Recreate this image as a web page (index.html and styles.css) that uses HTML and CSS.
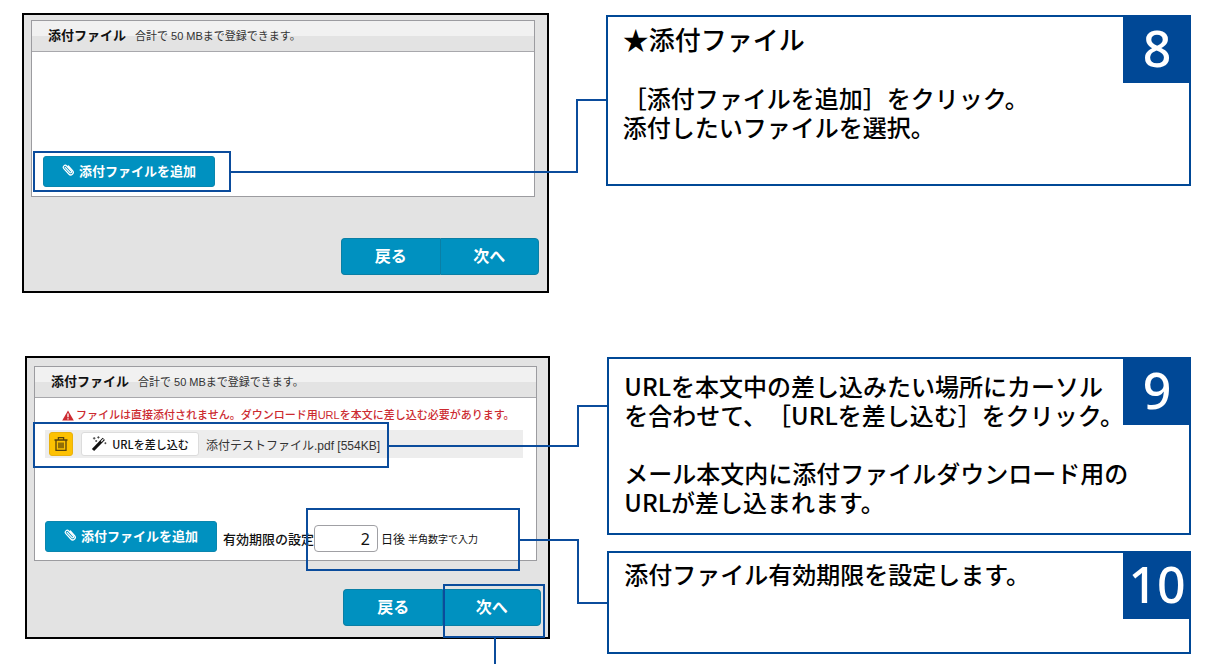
FILE: index.html
```html
<!DOCTYPE html>
<html lang="ja">

<head>
    <meta charset="UTF-8">
    <meta name="viewport" content="width=device-width, initial-scale=1">
    <title>添付ファイル</title>
    <link rel="stylesheet" href="styles.css">
</head>

<body>
    <svg class="defs" aria-hidden="true">
        <symbol id="clip" viewBox="0 0 12 12">
            <path d="M3.2 3.4 8 8.6a1 1 0 0 0 1.5-1.3L4.7 2A1.9 1.9 0 0 0 1.8 4.6l5 5.4a2.5 2.5 0 0 0 3.8-3.4L6.4 2" fill="none" stroke="currentColor" stroke-width="1.2" stroke-linecap="round"/>
        </symbol>
    </svg>

    <main class="page">
        <section class="step">
            <div class="frame">
                <div class="panel">
                    <div class="panel-head"><h2>添付ファイル</h2><span>合計で 50 MBまで登録できます。</span></div>
                    <div class="panel-body">
                        <div class="add-row">
                            <button type="button" class="btn-add"><svg><use href="#clip"/></svg>添付ファイルを追加</button>
                        </div>
                    </div>
                </div>
                <div class="nav">
                    <button type="button">戻る</button>
                    <button type="button">次へ</button>
                </div>
                <div class="mark mark-add"></div>
                <div class="line line-add"></div>
            </div>
            <div class="notes">
                <article class="note note8">
                    <h3>★添付ファイル</h3>
                    <p>［添付ファイルを追加］をクリック。<br>添付したいファイルを選択。</p>
                    <div class="badge">8</div>
                    <div class="tail"></div>
                </article>
            </div>
        </section>

        <section class="step step2">
            <div class="frame">
                <div class="panel">
                    <div class="panel-head"><h2>添付ファイル</h2><span>合計で 50 MBまで登録できます。</span></div>
                    <div class="panel-body">
                        <p class="warn">
                            <svg viewBox="0 0 12 11"><path d="M6 .4 11.8 10.6H.2z" fill="#cc2a30"/><path d="M6 3.6v3.6M6 8.2v1.3" stroke="#fff" stroke-width="1.3"/></svg>ファイルは直接添付されません。ダウンロード用URLを本文に差し込む必要があります。
                        </p>
                        <div class="file">
                            <button type="button" class="btn-trash" aria-label="削除">
                                <svg viewBox="0 0 16 16" fill="none" stroke="#59430c" stroke-width="1.3"><path d="M1.5 4h13M5.4 3.8V1.6h5.2v2.2M3 4.2v10.2h10V4.2M6 6.4v5.8M8 6.4v5.8M10 6.4v5.8"/></svg>
                            </button>
                            <button type="button" class="btn-url">
                                <svg viewBox="0 0 16 16"><path d="M2 14 12.8 2.8" stroke="#111" stroke-width="3.2"/><path d="m10.2 5.5 2.2-2.3" stroke="#fff" stroke-width="1.2"/><path d="M3.2 1v2.6M1.9 2.3h2.6M7.4.2v2.4M6.2 1.4h2.4M5.2 4v2M4.2 5h2M14.4 6.2v2M13.4 7.2h2" stroke="#333" stroke-width=".8"/></svg>URLを差し込む
                            </button>
                            <span>添付テストファイル.pdf [554KB]</span>
                        </div>
                        <div class="add-row">
                            <button type="button" class="btn-add"><svg><use href="#clip"/></svg>添付ファイルを追加</button>
                            <div class="limit">
                                <label for="days">有効期限の設定</label>
                                <input type="text" id="days" value="2" inputmode="numeric">
                                <span>日後</span>
                                <small>半角数字で入力</small>
                            </div>
                        </div>
                    </div>
                </div>
                <div class="nav">
                    <button type="button">戻る</button>
                    <button type="button">次へ</button>
                </div>
                <div class="mark mark-file"></div>
                <div class="line line-file"></div>
                <div class="mark mark-limit"></div>
                <div class="line line-limit"></div>
                <div class="mark mark-next"></div>
                <div class="line line-next"></div>
            </div>
            <div class="notes">
                <article class="note note9">
                    <p>URLを本文中の差し込みたい場所にカーソル<br>を合わせて、［URLを差し込む］をクリック。</p>
                    <p>メール本文内に添付ファイルダウンロード用の<br>URLが差し込まれます。</p>
                    <div class="badge">9</div>
                    <div class="tail"></div>
                </article>
                <article class="note note10">
                    <p>添付ファイル有効期限を設定します。</p>
                    <div class="badge">10</div>
                    <div class="tail"></div>
                </article>
            </div>
        </section>
    </main>
</body>

</html>
```
FILE: styles.css
```css
* {
    box-sizing: border-box;
}

body {
    margin: 0;
    background: #fff;
    color: #111;
    font-family: "Liberation Sans", "Noto Sans CJK JP", sans-serif;
    text-spacing-trim: space-all;
}

h2, h3, p {
    margin: 0;
}

button, input {
    margin: 0;
    padding: 0;
    font-family: inherit;
}

.defs {
    display: none;
}

.page {
    padding: 13px 16px 10px 22px;
}

.step {
    display: grid;
    grid-template-columns: 9fr 10fr;
    gap: 57px;
    align-items: start;
}

.step2 {
    margin-top: 63px;
    padding-left: 3px;
}

/* screen */
.frame {
    position: relative;
    border: 2px solid #000;
    background: #e3e3e3;
    padding: 5px 12px 16px 7px;
    white-space: nowrap;
}

.step2 .frame {
    padding: 8px 11px 11px 7px;
}

.panel {
    border: 1px solid #9c9ca0;
    background: #fff;
}

.panel-head {
    display: flex;
    align-items: center;
    gap: 9px;
    height: 31px;
    padding-left: 16px;
    border-bottom: 1px solid #a8a8ac;
    background: linear-gradient(#f1f1f1 50%, #e3e3e3 50%);
}

.panel-head h2 {
    font-size: 13px;
    line-height: 20px;
}

.panel-head span {
    font-size: 11px;
    line-height: 20px;
    color: #333;
}

.panel-body {
    display: flex;
    flex-direction: column;
    min-height: 144px;
    padding: 9px 13px 9px 11px;
}

.step2 .panel-body {
    min-height: 162px;
    padding: 9px 13px 8px 10px;
}

.add-row {
    display: flex;
    gap: 6px;
    margin-top: auto;
}

.btn-add {
    display: flex;
    align-items: center;
    justify-content: center;
    gap: 5px;
    width: 172px;
    height: 31px;
    padding-bottom: 3px;
    border: 1px solid #0a86ae;
    border-radius: 3px;
    background: #0091c0;
    color: #fff;
    font-size: 13px;
    font-weight: bold;
}

.btn-add svg {
    width: 12px;
    height: 12px;
}

.nav {
    display: flex;
    justify-content: flex-end;
    margin: 41px -4px 0 0;
}

.step2 .nav {
    margin-top: 28px;
}

.nav button {
    width: 99px;
    height: 37px;
    padding-bottom: 4px;
    border: 1px solid #0a7fa5;
    border-radius: 0 4px 4px 0;
    background: #0091c0;
    color: #fff;
    font-size: 16px;
    font-weight: bold;
}

.nav button:first-child {
    border-right: 0;
    border-radius: 4px 0 0 4px;
}

.warn {
    display: flex;
    align-items: center;
    gap: 2px;
    padding-left: 17px;
    color: #cc2a30;
    font-size: 11px;
    font-weight: 500;
    line-height: 16px;
}

.warn svg {
    width: 12px;
    height: 11px;
}

.file {
    display: flex;
    align-items: center;
    height: 28px;
    margin-top: 7px;
    padding-left: 4px;
    background: #ededed;
    color: #333;
    font-size: 12px;
}

.btn-trash {
    display: flex;
    align-items: center;
    justify-content: center;
    width: 24px;
    height: 24px;
    margin-right: 8px;
    border: 1px solid #e9b10c;
    border-radius: 3px;
    background: #fdc101;
}

.btn-trash svg {
    width: 16px;
    height: 16px;
}

.btn-url {
    display: flex;
    align-items: center;
    justify-content: center;
    gap: 5px;
    width: 118px;
    height: 24px;
    margin-right: 7px;
    border: 1px solid #dcdcdc;
    border-radius: 3px;
    background: #fff;
    color: #111;
    font-family: "Noto Sans CJK JP", sans-serif;
    font-size: 11px;
    font-weight: 500;
}

.btn-url svg {
    width: 16px;
    height: 16px;
}

.limit {
    display: flex;
    align-items: center;
    height: 27px;
    margin-top: 4px;
    font-size: 12px;
}

.limit label {
    font-size: 13px;
    font-weight: 500;
}

.limit input {
    width: 64px;
    height: 27px;
    margin-right: 3px;
    padding-right: 7px;
    border: 1px solid #a0a0a4;
    border-radius: 4px;
    background: #fff;
    color: #111;
    font-family: "Noto Sans", sans-serif;
    font-size: 16px;
    text-align: right;
}

.limit small {
    margin-left: 3px;
    font-size: 10px;
}

/* callouts drawn over the screen */
.mark {
    position: absolute;
    border: 2px solid #0b4c9c;
}

.line {
    position: absolute;
    right: -31px;
    border: 0 solid #0b4c9c;
}

.mark-add {
    top: 136px;
    left: 9px;
    width: 198px;
    height: 41px;
}

.line-add {
    top: 84px;
    left: 207px;
    height: 74px;
    border-width: 0 2px 2px 0;
}

.mark-file {
    top: 64px;
    left: 6px;
    width: 356px;
    height: 46px;
}

.line-file {
    top: 47px;
    left: 362px;
    height: 42px;
    border-width: 0 2px 2px 0;
}

.mark-limit {
    top: 150px;
    left: 279px;
    width: 214px;
    height: 63px;
}

.line-limit {
    top: 181px;
    left: 493px;
    height: 65px;
    border-width: 2px 2px 0 0;
}

.mark-next {
    right: 3px;
    bottom: -1px;
    width: 102px;
    height: 54px;
}

.line-next {
    right: 52px;
    bottom: -27px;
    height: 26px;
    border-right-width: 2px;
}

/* notes */
.notes {
    display: grid;
    gap: 16px;
    margin-top: 1px;
    font-family: "Noto Sans CJK JP", sans-serif;
    font-size: 24px;
    font-weight: 500;
    line-height: 29px;
    color: #000;
}

.note {
    position: relative;
    border: 2px solid #004896;
    padding: 6px 15px;
}

.note h3 {
    margin-bottom: 29px;
    font-size: 26px;
    font-weight: 500;
    line-height: 31px;
}

.note p {
    white-space: nowrap;
}

.note p + p {
    margin-top: 29px;
}

.note8 {
    min-height: 171px;
    margin-top: 1px;
}

.note9 {
    min-height: 178px;
    padding-top: 12px;
}

.note10 {
    min-height: 103px;
}

.badge {
    position: absolute;
    top: -2px;
    right: -2px;
    width: 68px;
    height: 68px;
    background: #004896;
    color: #fff;
    font-family: "Noto Sans", sans-serif;
    font-size: 50px;
    line-height: 66px;
    text-align: center;
}

.tail {
    position: absolute;
    left: -32px;
    width: 30px;
    height: 2px;
    background: #0b4c9c;
}

.note8 .tail {
    top: 82px;
}

.note9 .tail {
    top: 46px;
}

.note10 .tail {
    top: 49px;
}
```
